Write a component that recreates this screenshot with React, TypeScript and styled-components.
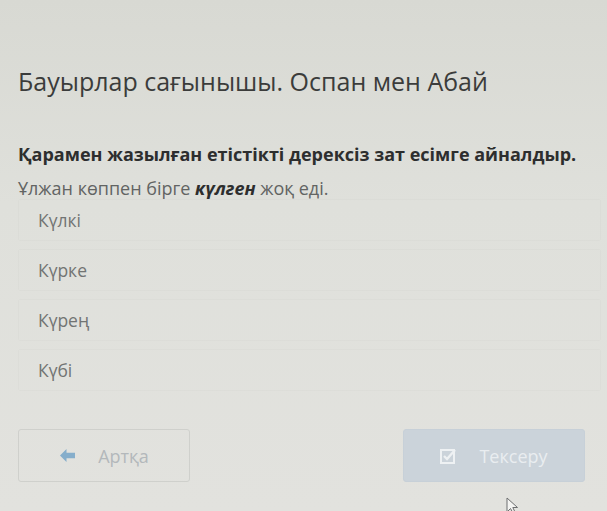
import React from 'react'
import styled, { createGlobalStyle } from 'styled-components'

const GlobalStyle = createGlobalStyle`
  html, body {
    margin: 0;
    padding: 0;
    background: #dddeda;
  }
  body {
    font-family: "Open Sans", "Noto Sans", "DejaVu Sans", sans-serif;
  }
`

const Page = styled.div`
  width: 607px;
  height: 511px;
  box-sizing: border-box;
  padding: 63px 0 0 18px;
  background: linear-gradient(180deg, #d8d9d3 0%, #dfe0db 40%, #e2e2de 100%);
  position: relative;
  overflow: hidden;
`

const Title = styled.h1`
  margin: 0;
  font-size: 25px;
  font-weight: 400;
  line-height: 36px;
  color: #3b3c3b;
`

const Question = styled.p`
  margin: 43px 0 0;
  font-size: 18px;
  font-weight: 700;
  line-height: 25px;
  color: #2d2e2e;
`

const Sentence = styled.p`
  margin: 9px 0 0;
  font-size: 18px;
  line-height: 24px;
  color: #626463;

  b {
    font-style: italic;
    font-weight: 700;
    color: #2d2e2e;
  }
`

const Options = styled.ul`
  list-style: none;
  margin: -1px 0 0;
  padding: 0;
  display: flex;
  flex-direction: column;
  gap: 8px;
`

const Option = styled.li`
  height: 40px;
  margin-right: 6px;
  padding-left: 19px;
  display: flex;
  align-items: center;
  font-size: 17.5px;
  color: #727473;
  border: 1px solid rgba(0, 0, 0, 0.014);
  border-radius: 2px;
`

const Footer = styled.div`
  display: flex;
  justify-content: space-between;
  margin: 38px 22px 0 0;
`

const Button = styled.button<{ $primary?: boolean }>`
  height: 53px;
  width: ${p => (p.$primary ? '182px' : '172px')};
  display: flex;
  align-items: center;
  justify-content: center;
  gap: 22px;
  border-radius: 3px;
  font-family: inherit;
  font-size: 18px;
  cursor: default;
  background: ${p => (p.$primary ? '#cbd3da' : 'transparent')};
  border: 1px solid ${p => (p.$primary ? '#c7d0d8' : '#cfd0cc')};
  color: ${p => (p.$primary ? '#e9edf0' : '#b3b8bb')};
`

const Cursor = styled.svg`
  position: absolute;
  left: 506px;
  top: 497px;
`

export default function App() {
  return (
    <Page>
      <GlobalStyle />
      <Title>Бауырлар сағынышы. Оспан мен Абай</Title>
      <Question>Қарамен жазылған етістікті дерексіз зат есімге айналдыр.</Question>
      <Sentence>
        Ұлжан көппен бірге <b>күлген</b> жоқ еді.
      </Sentence>
      <Options>
        <Option>Күлкі</Option>
        <Option>Күрке</Option>
        <Option>Күрең</Option>
        <Option>Күбі</Option>
      </Options>
      <Footer>
        <Button>
          <svg width="17" height="15" viewBox="0 0 17 15">
            <path d="M7.5 1 L1 7.5 L7.5 14 L7.5 10.3 L16 10.3 L16 4.7 L7.5 4.7 Z" fill="#86aecb" />
          </svg>
          <span>Артқа</span>
        </Button>
        <Button $primary>
          <svg width="17" height="16" viewBox="0 0 17 16">
            <rect x="1" y="2" width="13" height="13" fill="none" stroke="#eef1f3" strokeWidth="2" />
            <path d="M4 8 L7 11 L15 2" fill="none" stroke="#eef1f3" strokeWidth="2.4" />
          </svg>
          <span>Тексеру</span>
        </Button>
      </Footer>
      <Cursor width="14" height="16" viewBox="0 0 14 16">
        <path d="M1 1 L1 15 L4.5 11.5 L7 16 L9 15 L6.8 10.5 L11.5 10.5 Z" fill="#f4f4f2" stroke="#6d6f70" strokeWidth="1" />
      </Cursor>
    </Page>
  )
}
